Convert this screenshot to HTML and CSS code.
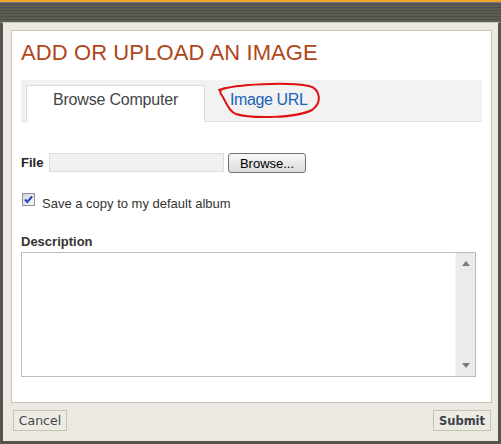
FILE: index.html
```html
<!DOCTYPE html>
<html lang="en">
<head>
    <meta charset="UTF-8">
    <title>Add or upload an image</title>
    <link rel="stylesheet" href="styles.css">
</head>
<body>
    <div class="topbar"></div>

    <div class="frame">
        <div class="panel">
            <h1>ADD OR UPLOAD AN IMAGE</h1>

            <div class="tabs">
                <div class="tab active">Browse Computer</div>
                <div class="tab url-tab">Image URL</div>
                <!-- hand-drawn marker round the second tab -->
                <svg class="scribble" width="112" height="40" viewBox="214 82 112 40">
                    <path d="M219 90 C236 84, 288 82, 309 86 C321 89, 322 103, 312 110 C296 118, 252 119, 236 114 C228 111, 226 101, 221 94 C219 91, 222 88, 226 88"
                          fill="none" stroke="#e01010" stroke-width="2" stroke-linecap="round"/>
                </svg>
            </div>

            <div class="file-row">
                <label class="lbl file-lbl">File</label>
                <input type="text" class="file-input" readonly>
                <button class="browse-btn">Browse...</button>
            </div>

            <div class="check-row">
                <span class="checkbox">
                    <svg width="11" height="11" viewBox="0 0 11 11">
                        <path d="M2 5.5 L4.3 8 L9 2.5" fill="none" stroke="#2446b8" stroke-width="2"/>
                    </svg>
                </span>
                <span class="check-text">Save a copy to my default album</span>
            </div>

            <div class="lbl desc-lbl">Description</div>
            <div class="desc-box">
                <textarea class="desc-text"></textarea>
                <div class="scrollbar">
                    <span class="arrow up"></span>
                    <span class="arrow down"></span>
                </div>
            </div>
        </div>

        <div class="footer">
            <button class="foot-btn">Cancel</button>
            <button class="foot-btn submit">Submit</button>
        </div>
    </div>
</body>
</html>
```

FILE: styles.css
```css
body {
    margin: 0;
    width: 501px;
    height: 444px;
    overflow: hidden;
    font-family: "Liberation Sans", Arial, sans-serif;
    background-color: #55544e;
}
.topbar {
    height: 20px;
    border-top: 2px solid #f0a52a;
    background:
        linear-gradient(#6c7585, #6c7585) top / 100% 1px no-repeat,
        repeating-linear-gradient(to bottom, #5c5c55 0, #5c5c55 2px, #4f4f49 2px, #4f4f49 3px);
}
.frame {
    box-sizing: border-box;
    height: 422px;
    background-color: #ebe9e1;
    border: 3px solid #55544e;
    border-top: 1px solid #c9c8c0;
    padding: 7px 6px 0 8px;
}
.panel {
    box-sizing: border-box;
    height: 373px;
    background-color: #fff;
    border: 1px solid #c5c4b6;
    padding: 0 9px;
}
h1 {
    margin: 9px 0 14px;
    font-size: 22px;
    line-height: 26px;
    font-weight: normal;
    letter-spacing: 0.1px;
    color: #b0461a;
}
.tabs {
    position: relative;
    display: flex;
    height: 36px;
    padding: 5px 5px 0;
    background-color: #f2f2f2;
    border-bottom: 1px solid #e2e2e2;
}
.tab {
    box-sizing: border-box;
    height: 37px;
    margin-bottom: -1px;
    padding: 6px 26px 0;
    font-size: 16px;
    letter-spacing: -0.2px;
    color: #1a62b8;
}
.tab.active {
    padding-top: 5px;
    background-color: #fff;
    border: 1px solid #dcdcdc;
    border-bottom: none;
    color: #454545;
}
.url-tab {
    padding-left: 25px;
    letter-spacing: -0.4px;
}
.scribble {
    position: absolute;
    left: 193px;
    top: 2px;
}
.lbl {
    font-size: 13px;
    font-weight: bold;
    color: #222;
}
.file-row {
    display: flex;
    align-items: flex-start;
    margin-top: 31px;
}
.file-lbl {
    width: 28px;
    line-height: 19px;
}
.file-input {
    box-sizing: border-box;
    width: 175px;
    height: 19px;
    margin: 0;
    padding: 0;
    background-color: #f0f0f0;
    border: 1px solid #dcdcdc;
}
.browse-btn {
    box-sizing: border-box;
    width: 78px;
    height: 20px;
    margin: 0 0 0 4px;
    padding: 0;
    font-family: "Liberation Sans", Arial, sans-serif;
    font-size: 13px;
    color: #000;
    background: linear-gradient(#f7f7f7, #dcdcdc);
    border: 1px solid #707070;
    border-radius: 3px;
}
.check-row {
    display: flex;
    align-items: flex-start;
    margin-top: 20px;
}
.checkbox {
    box-sizing: border-box;
    display: flex;
    align-items: center;
    justify-content: center;
    width: 13px;
    height: 13px;
    margin-left: 1px;
    border: 1px solid #8c93a0;
    background: linear-gradient(135deg, #d8d8d8, #f6f6f6);
}
.check-text {
    margin: 3px 0 0 7px;
    font-size: 13px;
    line-height: 15px;
    color: #333;
}
.desc-lbl {
    margin: 23px 0 3px;
    line-height: 15px;
    color: #333;
}
.desc-box {
    box-sizing: border-box;
    display: flex;
    width: 455px;
    height: 125px;
    border: 1px solid #bdbdb0;
}
.desc-text {
    flex: 1;
    margin: 0;
    border: none;
    resize: none;
    overflow: hidden;
    outline: none;
}
.scrollbar {
    box-sizing: border-box;
    display: flex;
    flex-direction: column;
    justify-content: space-between;
    align-items: center;
    width: 20px;
    padding: 8px 0 8px;
    background-color: #ebebeb;
    border-left: 1px solid #f6f6f6;
}
.arrow {
    width: 0;
    height: 0;
    border-left: 4.5px solid transparent;
    border-right: 4.5px solid transparent;
}
.arrow.up {
    border-bottom: 5px solid #7a7a7a;
}
.arrow.down {
    border-top: 5px solid #7a7a7a;
}
.footer {
    display: flex;
    justify-content: space-between;
    padding: 7px 1px 0 2px;
}
.foot-btn {
    box-sizing: border-box;
    height: 21px;
    width: 54px;
    margin: 0;
    padding: 0;
    font-family: "DejaVu Sans", Verdana, sans-serif;
    font-size: 12.5px;
    color: #464650;
    background-color: #ecebe4;
    border: 1px solid #c4c3b5;
}
.foot-btn.submit {
    width: 58px;
    font-size: 11.5px;
    font-weight: bold;
    color: #404048;
}
```
